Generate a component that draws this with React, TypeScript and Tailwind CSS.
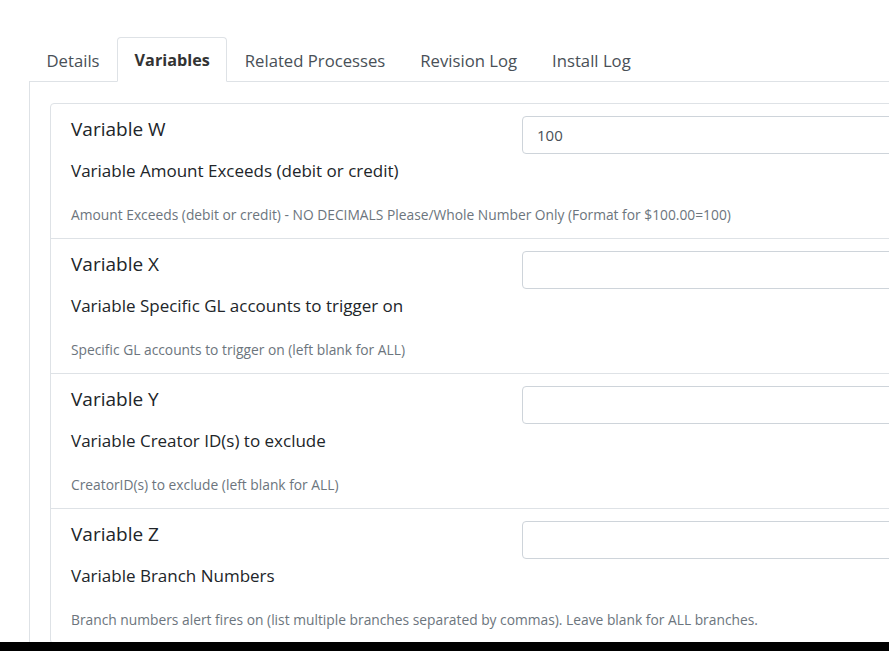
import React from "react";

const font = { fontFamily: '"Open Sans", "Noto Sans", sans-serif' };

interface VariableRow {
  name: string;
  label: string;
  help: string;
  value: string;
}

const rows: VariableRow[] = [
  {
    name: "Variable W",
    label: "Variable Amount Exceeds (debit or credit)",
    help: "Amount Exceeds (debit or credit) - NO DECIMALS Please/Whole Number Only (Format for $100.00=100)",
    value: "100",
  },
  {
    name: "Variable X",
    label: "Variable Specific GL accounts to trigger on",
    help: "Specific GL accounts to trigger on (left blank for ALL)",
    value: "",
  },
  {
    name: "Variable Y",
    label: "Variable Creator ID(s) to exclude",
    help: "CreatorID(s) to exclude (left blank for ALL)",
    value: "",
  },
  {
    name: "Variable Z",
    label: "Variable Branch Numbers",
    help: "Branch numbers alert fires on (list multiple branches separated by commas). Leave blank for ALL branches.",
    value: "",
  },
];

const tabs = ["Details", "Variables", "Related Processes", "Revision Log", "Install Log"];

export default function App() {
  return (
    <div className="w-[889px] h-[651px] overflow-hidden bg-white flex flex-col" style={font}>
      <div className="flex-1 overflow-hidden pl-[29px] pt-[37px]">
        <div className="flex border-b border-[#dee2e6] w-[1000px]">
          {tabs.map((t) => (
            <div
              key={t}
              className={
                t === "Variables"
                  ? "px-[16.5px] h-[45px] pt-[2px] -mb-px flex items-center text-[16.2px] font-bold text-[#333] border border-[#dee2e6] border-b-white rounded-t-[4px] bg-white"
                  : "px-[16.5px] h-[45px] pt-[2px] -mb-px flex items-center text-[16.7px] text-[#495057] border border-transparent"
              }
            >
              {t}
            </div>
          ))}
        </div>
        <div className="w-[1000px] border-l border-[#dee2e6] rounded-bl-[4px] pl-[20px] pt-[21px] h-[600px]">
          <div className="border border-[#dee2e6] rounded-[4px]">
            {rows.map((r, i) => (
              <div
                key={r.name}
                className={
                  "flex pt-[12px] pb-[13px] " + (i > 0 ? "border-t border-[#dee2e6]" : "")
                }
              >
                <div className="w-[471px] pl-[20px] shrink-0">
                  <div className="h-[26px] leading-[26px] text-[19px] text-[#212529]">{r.name}</div>
                  <div className="mt-[16px] h-[26px] leading-[26px] text-[17px] text-[#212529]">{r.label}</div>
                  <div className="mt-[21px] h-[20px] leading-[20px] text-[13.8px] text-[#6c757d] whitespace-nowrap">
                    {r.help}
                  </div>
                </div>
                <div className="flex-1">
                  <input
                    readOnly
                    value={r.value}
                    className="w-[500px] h-[38px] border border-[#ced4da] rounded-[4px] px-[14px] text-[15px] text-[#495057] outline-none"
                    style={font}
                  />
                </div>
              </div>
            ))}
          </div>
        </div>
      </div>
      <div className="h-[9px] bg-black shrink-0" />
    </div>
  );
}
